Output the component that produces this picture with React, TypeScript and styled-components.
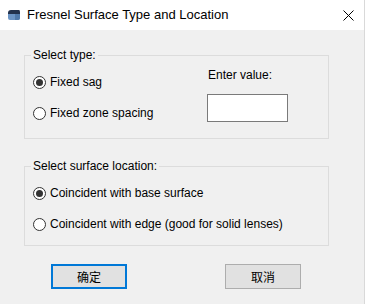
import React from "react";
import styled, { createGlobalStyle } from "styled-components";

const Global = createGlobalStyle`
  html, body { margin: 0; padding: 0; background: #f0f0f0; }
  body { font-family: "Segoe UI", "Liberation Sans", "Noto Sans CJK SC", sans-serif; font-size: 12px; color: #000; }
`;

const Window = styled.div`
  width: 365px;
  height: 304px;
  box-sizing: border-box;
  display: flex;
  flex-direction: column;
  background: #f0f0f0;
  border-right: 1px solid #d9d9d9;
`;

const TitleBar = styled.div`
  height: 30px;
  flex: none;
  display: flex;
  align-items: center;
  padding: 0 10px 0 7px;
  background: #ffffff;
  gap: 6px;
`;

const TitleText = styled.span`
  flex: 1;
  font-size: 13px;
  line-height: 16px;
  color: #000;
`;

const Close = styled.div`
  width: 11px;
  height: 11px;
  display: flex;
`;

const Body = styled.div`
  flex: 1;
  padding: 17px 35px 0 24px;
  display: flex;
  flex-direction: column;
`;

const Group = styled.fieldset<{ $gap?: number }>`
  margin: 0;
  margin-top: ${(p) => p.$gap ?? 0}px;
  padding: 0;
  min-width: 0;
  border: 1px solid #dcdcdc;
`;

const Legend = styled.legend`
  margin-left: 6px;
  padding: 0 2px;
  line-height: 16px;
  font-size: 12px;
`;

const TypeGrid = styled.div`
  display: grid;
  grid-template-columns: 174px 1fr;
  padding: 0 0 16px 8px;
`;

const Column = styled.div<{ $top: number; $gap: number }>`
  display: flex;
  flex-direction: column;
  align-items: flex-start;
  padding-top: ${(p) => p.$top}px;
  gap: ${(p) => p.$gap}px;
`;

const LocationList = styled.div`
  display: flex;
  flex-direction: column;
  gap: 15px;
  padding: 11px 0 13px 8px;
`;

const RadioRow = styled.label`
  display: flex;
  align-items: center;
  gap: 3px;
  height: 16px;
  line-height: 16px;
`;

const RadioCircle = styled.span<{ $on?: boolean }>`
  width: 13px;
  height: 13px;
  box-sizing: border-box;
  border-radius: 50%;
  border: 1px solid #333333;
  background: #ffffff;
  display: flex;
  align-items: center;
  justify-content: center;
  &::after {
    content: "";
    width: 7px;
    height: 7px;
    border-radius: 50%;
    background: ${(p) => (p.$on ? "#333333" : "transparent")};
  }
`;

const Label = styled.span`
  line-height: 16px;
  padding-left: 1px;
`;

const ValueBox = styled.div`
  width: 81px;
  height: 28px;
  box-sizing: border-box;
  border: 1px solid #7a7a7a;
  background: #ffffff;
`;

const ButtonRow = styled.div`
  display: flex;
  gap: 98px;
  margin-top: 18px;
  padding-left: 27px;
`;

const Button = styled.button<{ $default?: boolean }>`
  width: 76px;
  height: 25px;
  box-sizing: border-box;
  margin: 0;
  padding: 0;
  background: #e1e1e1;
  border: ${(p) => (p.$default ? "2px solid #0078d7" : "1px solid #adadad")};
  font-family: "Noto Sans CJK SC", sans-serif;
  font-size: 12px;
  color: #000;
  line-height: 16px;
`;

function Radio({ on, text }: { on?: boolean; text: string }) {
  return (
    <RadioRow>
      <RadioCircle $on={on} />
      <Label>{text}</Label>
    </RadioRow>
  );
}

export default function App() {
  return (
    <>
      <Global />
      <Window>
        <TitleBar>
          <svg width="14" height="12" viewBox="0 0 14 12">
            <path d="M1 4 Q1 1 4 1 L12 1 Q13 1 13 3 L13 5 L1 5 Z" fill="#22324d" />
            <path d="M1 5 L13 5 L13 9 Q13 11 11 11 L3 11 Q1 11 1 9 Z" fill="#6b94c4" />
            <path d="M8 5 L13 5 L13 9 Q13 11 11 11 L8 11 Z" fill="#4f79aa" />
          </svg>
          <TitleText>Fresnel Surface Type and Location</TitleText>
          <Close>
            <svg width="11" height="11" viewBox="0 0 11 11">
              <path d="M0.5 0.5 L10.5 10.5 M10.5 0.5 L0.5 10.5" stroke="#000" strokeWidth="1" />
            </svg>
          </Close>
        </TitleBar>
        <Body>
          <Group>
            <Legend>Select type:</Legend>
            <TypeGrid>
              <Column $top={11} $gap={15}>
                <Radio on text="Fixed sag" />
                <Radio text="Fixed zone spacing" />
              </Column>
              <Column $top={4} $gap={11}>
                <Label>Enter value:</Label>
                <ValueBox />
              </Column>
            </TypeGrid>
          </Group>
          <Group $gap={19}>
            <Legend>Select surface location:</Legend>
            <LocationList>
              <Radio on text="Coincident with base surface" />
              <Radio text="Coincident with edge (good for solid lenses)" />
            </LocationList>
          </Group>
          <ButtonRow>
            <Button $default>确定</Button>
            <Button>取消</Button>
          </ButtonRow>
        </Body>
      </Window>
    </>
  );
}
